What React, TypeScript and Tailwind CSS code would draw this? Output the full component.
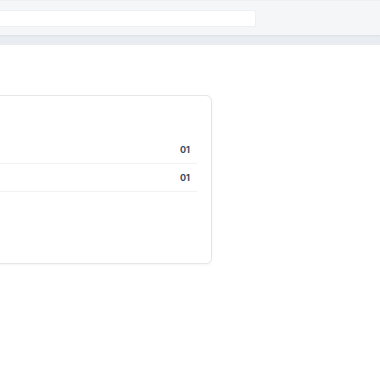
export default function App() {
    const rows = ["01", "01"];

    return (
        <div className="w-[380px] h-[380px] overflow-hidden bg-white" style={{ fontFamily: "Inter, 'Open Sans', sans-serif" }}>
            {/* Top bar */}
            <div className="h-[35px] bg-[#f5f6f8] border-t border-[#eef0f3] shadow-[0_1px_2px_rgba(0,0,0,0.06)] relative z-10 flex items-center">
                <div className="h-[17px] w-[300px] ml-[-44px] bg-white border border-[#eef0f3] rounded-[2px]" />
            </div>
            <div className="h-[10px] bg-[#e9ecf0]" />

            {/* Card */}
            <div className="mt-[50px] ml-[-100px] w-[312px] h-[169px] bg-white border border-[#e4e6ea] rounded-[6px] shadow-[0_1px_3px_rgba(0,0,0,0.05)] pr-[14px]">
                <div className="h-[40px]" />
                {rows.map((r, i) => (
                    <div key={i} className="h-[28px] flex items-center justify-end border-b border-[#f1f2f4] pr-[7px]">
                        <span className="text-[9px] font-bold text-[#3b4d61]">{r}</span>
                    </div>
                ))}
            </div>
        </div>
    );
}
